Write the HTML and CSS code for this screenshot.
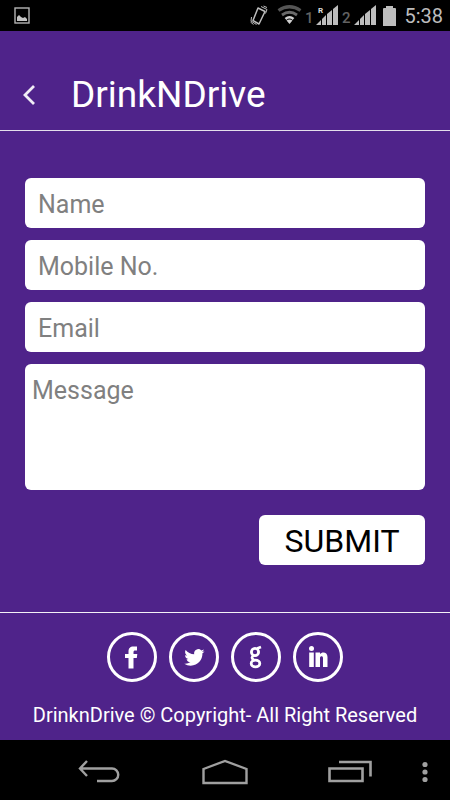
FILE: index.html
```
<!DOCTYPE html>
<html lang="en">
<head>
    <meta charset="UTF-8">
    <meta name="viewport" content="width=device-width, initial-scale=1.0">
    <title>DrinkNDrive</title>
    <link rel="stylesheet" href="styles.css">
</head>

<body>
    <!-- Status bar -->
    <div class="status-bar">
        <svg class="status-picture" width="16" height="17" viewBox="0 0 16 17">
            <rect x="1" y="1" width="14" height="15" fill="none" stroke="#b4b4b4" stroke-width="1.4"/>
            <path d="M3 14v-4l2-2 2 2 2 1 2-1 2 2v2z" fill="#c4c4c4"/>
        </svg>
        <svg width="134" height="22" viewBox="0 0 134 22">
            <!-- vibrate -->
            <g fill="none" stroke="#bdbdbd" stroke-width="1.5" stroke-linejoin="round">
                <path d="M9 3l7 3.500-6 12.500-6-3.500z"/>
                <path d="M12 1.500l6 3-1.500 4M14.500 1l3.500 1.500M2.500 12l-.5 4 5.500 3.500M1.500 17l3 2.500" stroke-width="1"/>
            </g>
            <!-- wifi -->
            <g fill="none">
                <path d="M29.500 5.500q11-7.500 22 0" stroke="#555" stroke-width="3.200"/>
                <path d="M33 10q7.500-5.500 15 0" stroke="#6a6a6a" stroke-width="2.800"/>
                <path d="M36.500 14q4-3.500 8 0" stroke="#d0d0d0" stroke-width="2.600"/>
                <path d="M37.500 15.500q3-2 6 0l-3 3.500z" fill="#d0d0d0"/>
            </g>
            <text x="56" y="18" class="sim-number">1</text>
            <text x="69" y="8" class="roaming">R</text>
            <g fill="#bdbdbd">
                <path d="M67 20l5-5v5zM73 14l4-4v10h-4zM78 9l5-4v15h-5zM84 4l5-4v20h-5z"/>
                <path d="M105 20l5-5v5zM111 14l4-4v10h-4zM116 9l5-4v15h-5zM122 4l5-4v20h-5z"/>
            </g>
            <text x="93" y="18" class="sim-number">2</text>
        </svg>
        <svg width="13" height="20" viewBox="0 0 13 20">
            <path d="M0 3q0-1 1-1h2V0h7v2h2q1 0 1 1v17H0z" fill="#bdbdbd"/>
        </svg>
        <span class="clock">5:38</span>
    </div>

    <header class="header">
        <a href="#" class="back-link" aria-label="Back">
            <svg width="14" height="22" viewBox="0 0 14 22">
                <path d="M12 2L3 11l9 9" fill="none" stroke="#f1edf6" stroke-width="2.800"/>
            </svg>
        </a>
        <h1 class="title">DrinkNDrive</h1>
    </header>

    <main class="content">
        <form class="contact-form" id="contactForm">
            <input type="text" class="field" name="name" placeholder="Name" aria-label="Name">
            <input type="tel" class="field" name="mobile" placeholder="Mobile No." aria-label="Mobile No.">
            <input type="email" class="field" name="email" placeholder="Email" aria-label="Email">
            <textarea class="field message" name="message" placeholder="Message" aria-label="Message"></textarea>
            <button type="submit" class="submit">SUBMIT</button>
        </form>
    </main>

    <footer class="footer">
        <div class="social">
            <a href="#" class="social-link" aria-label="Facebook">
                <svg width="44" height="44" viewBox="0 0 44 44" fill="#fff">
                    <path d="M27 11.500h-3.500c-3.500 0-5 2-5 5V19H15v4h3.500v10.500h5V23h3.300l.5-4h-3.800v-1.800c0-1.200.5-1.700 1.700-1.700H27z"/>
                </svg>
            </a>
            <a href="#" class="social-link" aria-label="Twitter">
                <svg width="44" height="44" viewBox="0 0 24 24">
                    <path transform="translate(6.700 6.700) scale(.46)" fill="#fff" d="M23.950 4.570a10 10 0 0 1-2.820.77 4.960 4.960 0 0 0 2.160-2.720c-.950.550-2 .950-3.130 1.180a4.920 4.920 0 0 0-8.380 4.480C7.690 8.090 4.070 6.130 1.640 3.160a4.820 4.820 0 0 0-.66 2.480c0 1.700.87 3.200 2.190 4.100a4.900 4.900 0 0 1-2.230-.620v.060a4.920 4.920 0 0 0 3.950 4.830 5 5 0 0 1-2.210.080 4.940 4.940 0 0 0 4.600 3.420A9.870 9.870 0 0 1 0 19.540a14 14 0 0 0 7.550 2.210c9.050 0 14-7.500 14-13.980 0-.21 0-.42-.020-.630a10 10 0 0 0 2.420-2.570z"/>
                </svg>
            </a>
            <a href="#" class="social-link" aria-label="Google">
                <svg width="44" height="44" viewBox="0 0 44 44" fill="none" stroke="#fff">
                    <ellipse cx="21" cy="17" rx="3.600" ry="3.700" stroke-width="2.800"/>
                    <path d="M23 13.500l4-1.500M20 20.500c-3 1.500-2.500 3.500 0 4.200" stroke-width="2.600"/>
                    <ellipse cx="21.500" cy="28.500" rx="4.300" ry="3.300" stroke-width="2.800"/>
                </svg>
            </a>
            <a href="#" class="social-link" aria-label="LinkedIn">
                <svg width="44" height="44" viewBox="0 0 44 44" fill="#fff">
                    <circle cx="15.500" cy="13.500" r="2.500"/>
                    <path d="M13.200 17.500h4.600V32h-4.600zM19.500 17.500H24v1.600c2-2.700 7.500-2.400 7.500 3V32H27v-9c0-2.500-3-2.300-3 0v9h-4.500z"/>
                </svg>
            </a>
        </div>
        <p class="copyright">DrinknDrive © Copyright- All Right Reserved</p>
    </footer>

    <!-- System navigation -->
    <nav class="nav-bar">
        <button type="button" class="nav-button" aria-label="Back">
            <svg width="42" height="24" viewBox="0 0 42 24" fill="none" stroke="#a0a0a0" stroke-width="2.400">
                <path d="M9 1L2 8.500 9 16M2 8.500h32a6.200 6.200 0 0 1 0 12.500H19"/>
            </svg>
        </button>
        <button type="button" class="nav-button" aria-label="Home">
            <svg width="46" height="26" viewBox="0 0 46 26" fill="none" stroke="#a0a0a0" stroke-width="2.400">
                <path d="M1.500 10L23 2l21.500 8v14h-43z"/>
            </svg>
        </button>
        <button type="button" class="nav-button" aria-label="Recent apps">
            <svg width="44" height="24" viewBox="0 0 44 24" fill="none" stroke="#a0a0a0" stroke-width="2.600">
                <path d="M1.500 8.500h33v12.500h-33zM11 2h31.500v14.500"/>
            </svg>
        </button>
        <button type="button" class="nav-button menu-button" aria-label="Menu">
            <svg width="6" height="22" viewBox="0 0 6 22" fill="#a0a0a0">
                <circle cx="3" cy="3.500" r="2.600"/>
                <circle cx="3" cy="11" r="2.600"/>
                <circle cx="3" cy="18.500" r="2.600"/>
            </svg>
        </button>
    </nav>
</body>
</html>
```
FILE: styles.css
```
* {
    box-sizing: border-box;
}

body {
    margin: 0;
    min-height: 100vh;
    display: flex;
    flex-direction: column;
    background-color: #4f238a;
    color: white;
    font-family: Roboto, Arial, sans-serif;
}

svg {
    display: block;
}

.status-bar {
    display: flex;
    align-items: center;
    height: 31px;
    padding: 0 7px 0 14px;
    background-color: #000;
}

.status-picture {
    margin-right: auto;
}

.sim-number {
    font-size: 15px;
    font-weight: 500;
    fill: #626262;
}

.roaming {
    font-size: 8px;
    font-weight: bold;
    fill: #ddd;
}

.clock {
    margin-left: 8px;
    padding-top: 2px;
    font-size: 20px;
    line-height: 29px;
    color: #bdbdbd;
}

.header {
    display: flex;
    align-items: center;
    height: 100px;
    padding: 28px 22px 0;
    border-bottom: 1px solid #e4deec;
}

.back-link {
    margin-right: 35px;
}

.title {
    margin: 0;
    font-size: 37px;
    font-weight: normal;
    line-height: 44px;
}

.content {
    flex: 1;
    padding: 47px 25px;
}

.contact-form {
    display: flex;
    flex-direction: column;
    gap: 12px;
}

.field {
    width: 100%;
    height: 50px;
    padding: 2px 13px 0;
    border: none;
    border-radius: 6px;
    background-color: #fff;
    color: #222;
    font-family: inherit;
    font-size: 25px;
}

    .field::placeholder {
        color: #808080;
        opacity: 1;
    }

.message {
    height: 126px;
    padding: 12px 7px;
    line-height: 30px;
    resize: none;
}

.submit {
    align-self: flex-end;
    width: 166px;
    height: 50px;
    margin-top: 13px;
    padding: 2px 0 0;
    border: none;
    border-radius: 6px;
    background-color: #fff;
    color: #000;
    font-family: inherit;
    font-size: 32px;
    cursor: pointer;
}

.footer {
    height: 128px;
    padding-top: 19px;
    border-top: 1px solid #f4f1f7;
}

.social {
    display: flex;
    justify-content: center;
    gap: 12px;
}

.social-link {
    width: 50px;
    height: 50px;
    border: 3px solid #fff;
    border-radius: 50%;
}

.copyright {
    margin: 20px 0 0;
    font-size: 20px;
    line-height: 26px;
    text-align: center;
}

.nav-bar {
    display: flex;
    align-items: center;
    height: 60px;
    padding: 4px 13px 0 36px;
    background-color: #000;
}

.nav-button {
    display: flex;
    flex: 1;
    justify-content: center;
    padding: 0;
    border: none;
    background: none;
    cursor: pointer;
}

.menu-button {
    flex: none;
    width: 24px;
}
```
